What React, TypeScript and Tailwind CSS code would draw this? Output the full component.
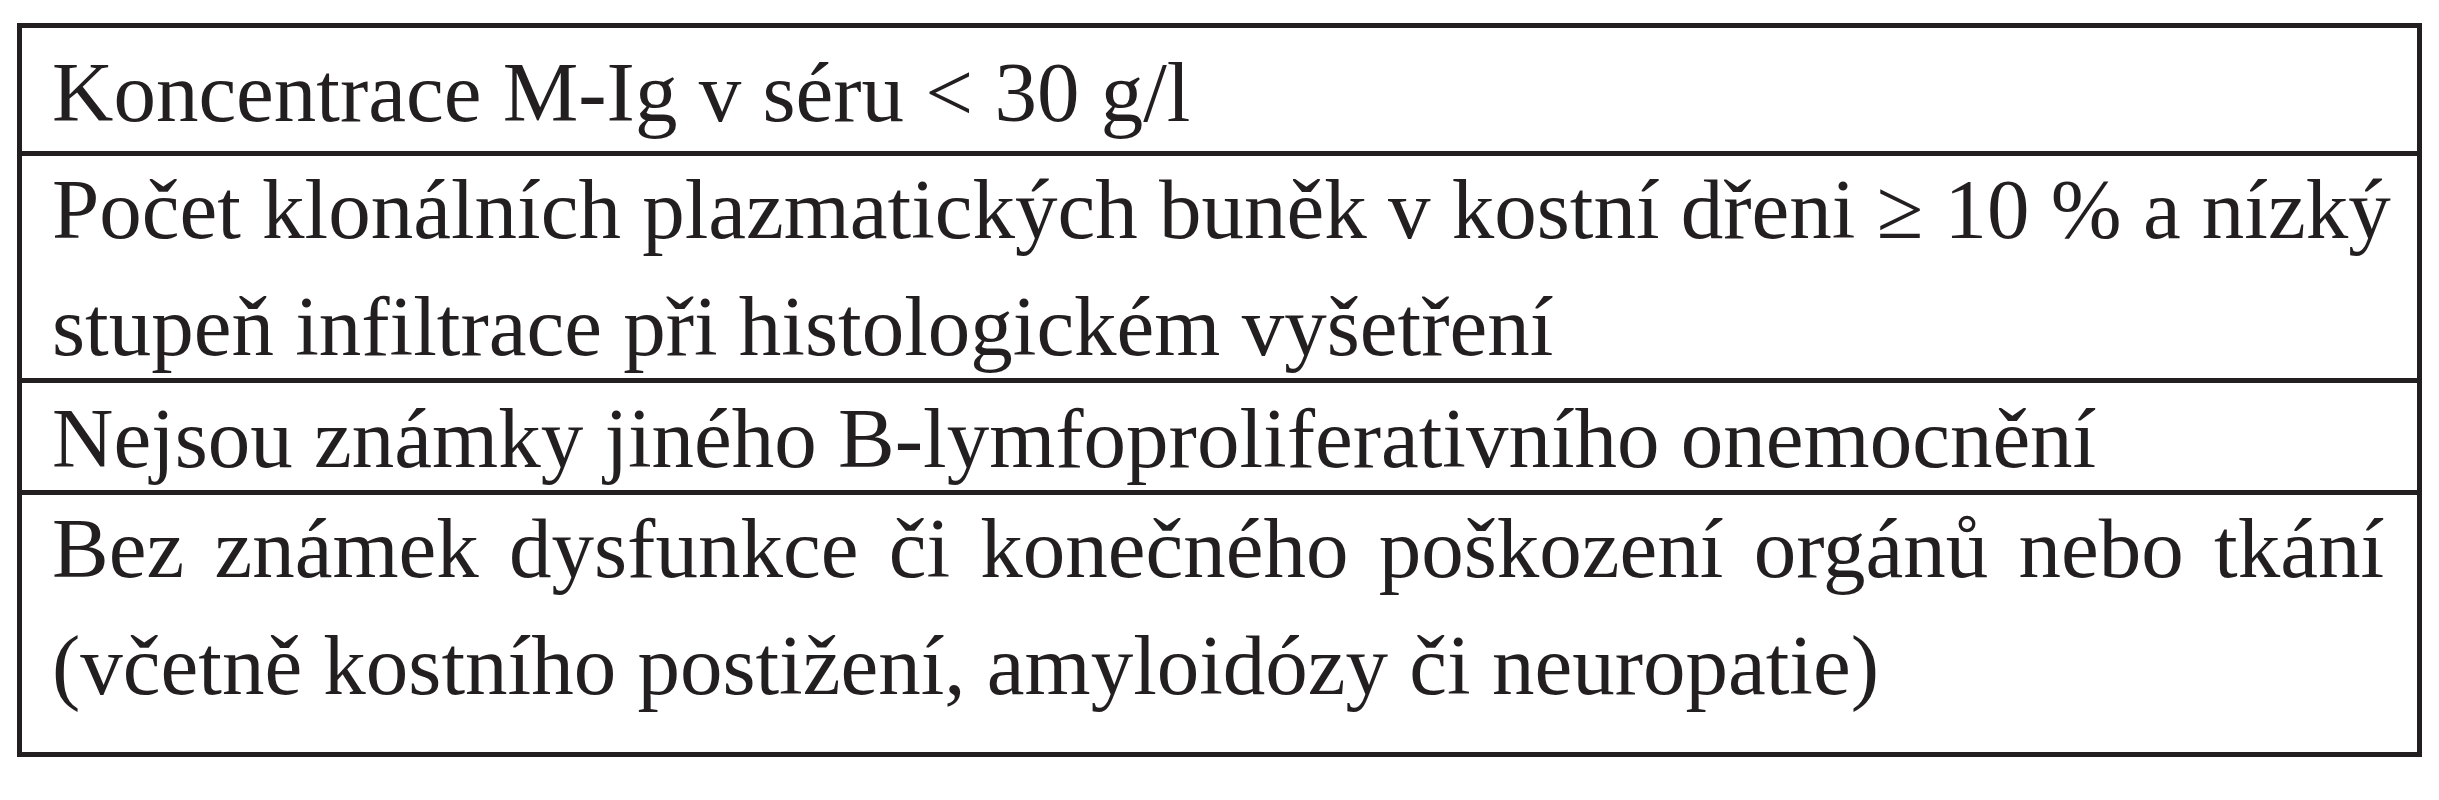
const rows: { lines: string[]; height: string; shift: string }[] = [
  {
    lines: ["Koncentrace M-Ig v séru < 30 g/l"],
    height: "h-[123px]",
    shift: "mt-[6px]",
  },
  {
    lines: [
      "Počet klonálních plazmatických buněk v kostní dřeni ≥ 10 % a nízký",
      "stupeň infiltrace při histologickém vyšetření",
    ],
    height: "h-[227px]",
    shift: "-mt-[5px]",
  },
  {
    lines: ["Nejsou známky jiného B-lymfoproliferativního onemocnění"],
    height: "h-[112px]",
    shift: "-mt-[3px]",
  },
  {
    lines: [
      "Bez známek dysfunkce či konečného poškození orgánů nebo tkání",
      "(včetně kostního postižení, amyloidózy či neuropatie)",
    ],
    height: "h-[262px]",
    shift: "-mt-[5px]",
  },
];

export default function App() {
  return (
    <div className="min-h-screen bg-white pt-[23px] pl-[17px]">
      <div className="w-[2405px] border-[5px] border-[#231f20] flex flex-col font-['Liberation_Serif',serif] text-[85px] leading-[117px] text-[#231f20]">
        {rows.map((row, i) => (
          <div
            key={i}
            className={`${row.height} pl-[30px] pr-[33px] ${i > 0 ? "border-t-[5px] border-[#231f20]" : ""}`}
          >
            <div className={row.shift}>
              {row.lines.map((line, j) =>
                j < row.lines.length - 1 ? (
                  <div key={j} className="w-[2332px] whitespace-nowrap text-justify [text-align-last:justify]">
                    {line}
                  </div>
                ) : (
                  <div key={j} className="whitespace-nowrap">
                    {line}
                  </div>
                ),
              )}
            </div>
          </div>
        ))}
      </div>
    </div>
  );
}
